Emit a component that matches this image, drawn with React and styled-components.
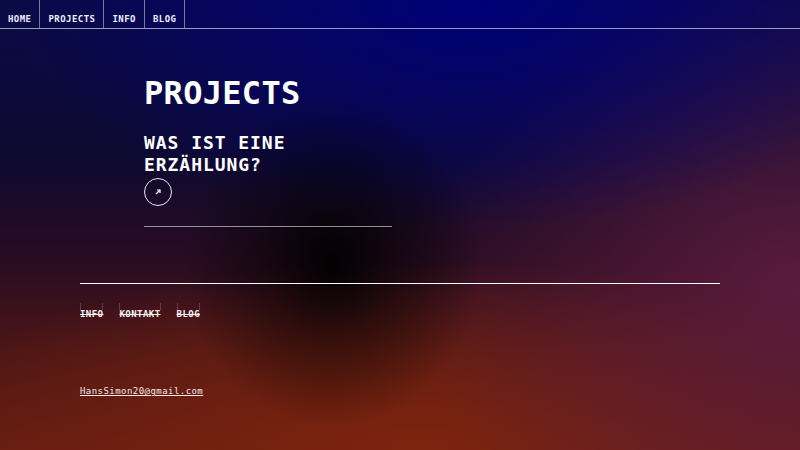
import React from "react";
import styled, { createGlobalStyle } from "styled-components";

const GlobalStyle = createGlobalStyle`
  html, body {
    margin: 0;
    padding: 0;
    background: #0a0a3a;
  }
  * {
    box-sizing: border-box;
  }
`;

const Page = styled.div`
  width: 800px;
  height: 450px;
  overflow: hidden;
  font-family: "DejaVu Sans Mono", "Liberation Mono", monospace;
  color: #fff;
  background:
    radial-gradient(ellipse 150px 165px at 332px 262px, rgba(0, 0, 0, 0.95) 0%, rgba(0, 0, 0, 0.45) 45%, rgba(0, 0, 0, 0) 100%),
    radial-gradient(ellipse 460px 230px at 470px 0px, rgba(0, 0, 120, 1) 0%, rgba(0, 0, 120, 0) 100%),
    radial-gradient(ellipse 380px 330px at 800px 290px, rgba(92, 28, 62, 0.95) 0%, rgba(92, 28, 62, 0) 100%),
    radial-gradient(ellipse 520px 190px at 420px 450px, rgba(125, 36, 14, 1) 0%, rgba(125, 36, 14, 0) 100%),
    linear-gradient(to bottom, #0a0a48 0%, #0e0a30 35%, #2a0c22 58%, #4c1616 78%, #641c12 100%);
`;

const Nav = styled.nav`
  display: flex;
  height: 29px;
  border-bottom: 1px solid rgba(255, 255, 255, 0.6);
`;

const NavItem = styled.a`
  display: block;
  height: 28px;
  padding: 13px 8px 0;
  font-size: 9px;
  line-height: 12px;
  font-weight: bold;
  letter-spacing: 0.45px;
  color: #eef;
  text-decoration: none;
  border-right: 1px solid rgba(255, 255, 255, 0.45);
`;

const Main = styled.main`
  padding: 45px 0 0 144px;
`;

const Title = styled.h1`
  margin: 0;
  font-size: 32px;
  line-height: 38px;
  font-weight: bold;
  letter-spacing: 0.3px;
`;

const Teaser = styled.h2`
  margin: 20px 0 0;
  width: 200px;
  font-size: 18px;
  line-height: 22px;
  font-weight: bold;
  letter-spacing: 0.95px;
`;

const ArrowButton = styled.a`
  display: flex;
  align-items: center;
  justify-content: center;
  width: 28px;
  height: 28px;
  margin-top: 2px;
  border: 1px solid rgba(255, 255, 255, 0.9);
  border-radius: 50%;
`;

const Rule = styled.hr`
  margin: 20px 0 0;
  width: 248px;
  border: 0;
  border-top: 1px solid rgba(255, 255, 255, 0.55);
`;

const Footer = styled.footer`
  margin: 56px 80px 0;
  border-top: 1px solid #fff;
`;

const FooterLinks = styled.div`
  display: flex;
  gap: 16px;
  margin-top: 24px;
`;

const FooterLink = styled.a`
  position: relative;
  font-size: 9px;
  line-height: 12px;
  font-weight: bold;
  letter-spacing: 0.45px;
  color: #f4eeee;
  text-decoration: line-through;

  &::before {
    content: "";
    position: absolute;
    left: 0;
    right: 0;
    top: -5px;
    height: 7px;
    border-left: 1px solid rgba(255, 255, 255, 0.18);
    border-right: 1px solid rgba(255, 255, 255, 0.18);
  }
`;

const Email = styled.a`
  display: inline-block;
  margin-top: 65px;
  font-size: 9px;
  line-height: 12px;
  letter-spacing: 0.45px;
  color: #f6e8e8;
  text-decoration: underline;
`;

const ArrowIcon = () => (
  <svg width="8" height="8" viewBox="0 0 8 8" fill="none" stroke="#fff" strokeWidth="1.2">
    <path d="M2 6 L6 2" />
    <path d="M3 2 H6 V5" />
  </svg>
);

const App = () => {
  return (
    <Page>
      <GlobalStyle />
      <Nav>
        <NavItem>HOME</NavItem>
        <NavItem>PROJECTS</NavItem>
        <NavItem>INFO</NavItem>
        <NavItem>BLOG</NavItem>
      </Nav>

      <Main>
        <Title>PROJECTS</Title>
        <Teaser>WAS IST EINE ERZÄHLUNG?</Teaser>
        <ArrowButton>
          <ArrowIcon />
        </ArrowButton>
        <Rule />
      </Main>

      <Footer>
        <FooterLinks>
          <FooterLink>INFO</FooterLink>
          <FooterLink>KONTAKT</FooterLink>
          <FooterLink>BLOG</FooterLink>
        </FooterLinks>
        <Email>HansSimon20@gmail.com</Email>
      </Footer>
    </Page>
  );
};

export default App;
